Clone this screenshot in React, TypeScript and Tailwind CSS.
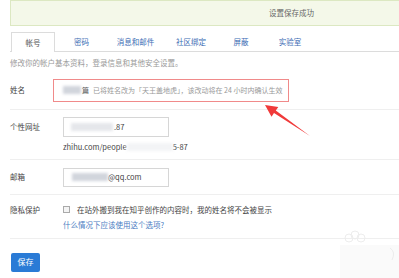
import React from 'react'

const font = { fontFamily: '"Noto Sans CJK SC", "Noto Sans", sans-serif' }

const tabs = [
  { label: '帐号', w: 'w-[44px]', active: true },
  { label: '密码', w: 'w-[53px]' },
  { label: '消息和邮件', w: 'w-[55px]' },
  { label: '社区绑定', w: 'w-[56px]' },
  { label: '屏蔽', w: 'w-[44px]' },
  { label: '实验室', w: 'w-[54px]' },
]

function Blur({ className }: { className: string }) {
  return <span className={'inline-block blur-[1.5px] ' + className} />
}

export default function App() {
  return (
    <div className="relative w-[399px] h-[278px] overflow-hidden bg-white text-[7.5px] leading-none text-[#444]" style={font}>
      <div className="pl-[10px]">
        {/* banner */}
        <div className="h-[26px] border border-r-0 border-[#dce8c2] bg-[#f4f8e9] flex items-center pl-[258px] text-[#666]">
          设置保存成功
        </div>

        {/* tabs */}
        <div className="mt-[6px] flex border-b border-[#dcdcdc] h-[20px]">
          {tabs.map((t) => (
            <div
              key={t.label}
              className={
                t.w +
                ' flex items-center justify-center ' +
                (t.active
                  ? 'ml-[1px] border border-b-0 border-[#dcdcdc] bg-white -mb-px text-[#555]'
                  : 'text-[#3b6cb4]')
              }
            >
              {t.label}
            </div>
          ))}
        </div>

        <div className="mt-[7px] text-[#999]">修改你的帐户基本资料，登录信息和其他安全设置。</div>

        {/* name */}
        <div className="mt-[12px] flex items-center h-[23px]">
          <div className="w-[43px]">姓名</div>
          <div className="h-[23px] w-[236px] border border-[#f08a8a] flex items-center pl-[9px] text-[7px] text-[#999]">
            <Blur className="w-[18px] h-[8px] bg-gray-300" />
            <span className="ml-[1px] text-[#555]">篇</span>
            <span className="ml-[4px]">已将姓名改为「天王盖地虎」，该改动将在 24 小时内确认生效</span>
          </div>
        </div>
        <div className="mt-[7px] border-t border-[#efefef]" />

        {/* url */}
        <div className="mt-[7px] flex items-center h-[20px]">
          <div className="w-[53px]">个性网址</div>
          <div className="h-[20px] w-[106px] border border-[#d6d6d6] flex items-center pl-[7px] text-[#444]">
            <Blur className="w-[42px] h-[8px] bg-gray-200" />
            <span className="ml-[1px]">.87</span>
          </div>
        </div>
        <div className="mt-[6px] ml-[53px] flex items-center text-[#444]">
          <span>zhihu.com/people</span>
          <Blur className="w-[46px] h-[8px] bg-gray-100" />
          <span>5-87</span>
        </div>
        <div className="mt-[8px] border-t border-[#efefef]" />

        {/* email */}
        <div className="mt-[8px] flex items-center h-[19px]">
          <div className="w-[53px]">邮箱</div>
          <div className="h-[19px] w-[106px] border border-[#d6d6d6] flex items-center pl-[8px]">
            <Blur className="w-[36px] h-[8px] bg-gray-300" />
            <span>@qq.com</span>
          </div>
        </div>
        <div className="mt-[7px] border-t border-[#efefef]" />

        {/* privacy */}
        <div className="mt-[11px] flex items-center">
          <div className="w-[53px]">隐私保护</div>
          <span className="inline-block w-[7px] h-[7px] border border-[#aaa] bg-[#f4f4f4]" />
          <span className="ml-[7px]">在站外搬到我在知乎创作的内容时，我的姓名将不会被显示</span>
        </div>
        <div className="mt-[8px] ml-[53px] text-[#4a7cc2]">什么情况下应该使用这个选项?</div>
        <div className="mt-[9px] border-t border-[#efefef]" />

        <button className="mt-[14px] ml-[1px] w-[29px] h-[19px] rounded-[2px] bg-[#2a7bd6] text-white text-[8px] flex items-center justify-center">
          保存
        </button>
      </div>

      {/* faint watermark */}
      <svg className="absolute left-[340px] top-[228px]" width="59" height="50" viewBox="0 0 59 50">
        <circle cx="9" cy="10" r="4" fill="none" stroke="#ededed" strokeWidth="1" />
        <circle cx="15" cy="7" r="4" fill="none" stroke="#ededed" strokeWidth="1" />
        <circle cx="21" cy="10" r="4" fill="none" stroke="#ededed" strokeWidth="1" />
        <rect x="0" y="17" width="59" height="33" fill="#fafafa" />
        <path d="M50 20 q6 4 2 12" fill="none" stroke="#ececec" strokeWidth="1" />
      </svg>

      {/* red arrow */}
      <svg className="absolute left-0 top-0 pointer-events-none" width="399" height="278">
        <polygon points="265,105 278.3,106.9 275.8,110.6 310,136 274,113 271.5,116.7" fill="#f03a3a" />
      </svg>
    </div>
  )
}
